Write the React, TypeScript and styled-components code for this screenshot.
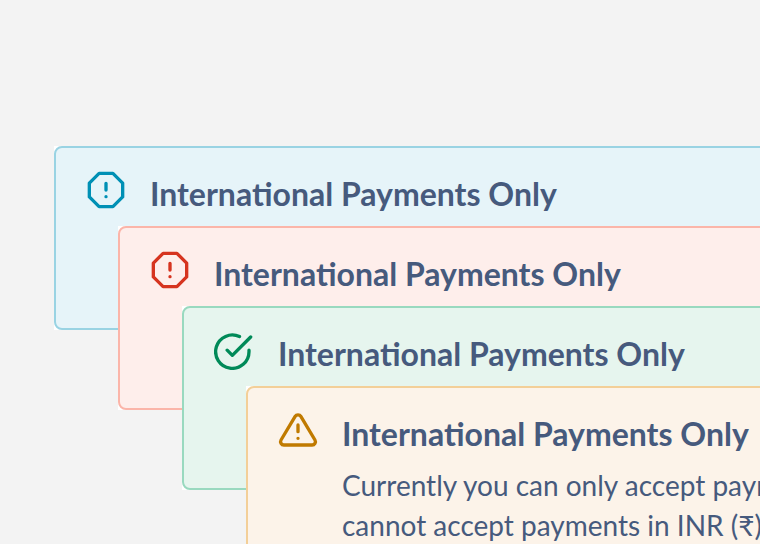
import React from "react";
import styled, { createGlobalStyle } from "styled-components";

const GlobalStyle = createGlobalStyle`
  * { box-sizing: border-box; }
  body { margin: 0; background: #f3f3f3; font-family: Lato, sans-serif; }
`;

type Tone = "info" | "negative" | "positive" | "notice";

const tones: Record<Tone, { bg: string; border: string; icon: string }> = {
  info: { bg: "#e6f4f9", border: "#99d3e3", icon: "#0090b5" },
  negative: { bg: "#feeeeb", border: "#fbb5a9", icon: "#d6341f" },
  positive: { bg: "#e6f5ee", border: "#99d9bf", icon: "#008a58" },
  notice: { bg: "#fcf3e9", border: "#f3cf98", icon: "#c07a00" },
};

const Stage = styled.main`
  position: relative;
  width: 760px;
  height: 544px;
  overflow: hidden;
  background: #f3f3f3;
`;

const Layer = styled.div<{ $level: number }>`
  position: absolute;
  left: ${({ $level }) => 54 + $level * 64}px;
  top: ${({ $level }) => 146 + $level * 80}px;
  width: 900px;
  height: 184px;
  background: #ffffff;
`;

const Alert = styled.section<{ $tone: Tone }>`
  height: 100%;
  padding: 22px 30px;
  display: flex;
  gap: 24px;
  border: 2px solid ${({ $tone }) => tones[$tone].border};
  border-radius: 8px;
  background: ${({ $tone }) => tones[$tone].bg};
`;

const Icon = styled.svg<{ $tone: Tone }>`
  flex: none;
  width: 40px;
  height: 40px;
  fill: none;
  stroke: ${({ $tone }) => tones[$tone].icon};
  stroke-width: 2;
  stroke-linecap: round;
  stroke-linejoin: round;
`;

const Copy = styled.div`
  flex: 1;
  padding-top: 1px;
  color: #465a7d;
  white-space: nowrap;
`;

const Title = styled.h2`
  margin: 0;
  font-size: 32px;
  line-height: 46px;
  font-weight: 700;
`;

const Description = styled.p`
  margin: 8px 0 0;
  font-size: 28px;
  line-height: 40px;
`;

function ToneIcon({ tone }: { tone: Tone }) {
  return (
    <Icon $tone={tone} viewBox="0 0 24 24">
      {(tone === "info" || tone === "negative") && (
        <path d="M7.86 2h8.28L22 7.86v8.28L16.14 22H7.86L2 16.14V7.86zM12 8v4M12 16h.01" />
      )}
      {tone === "positive" && (
        <path d="M21 12.1V13a10 10 0 1 1-5.7-9.03M22 4.2 11 15.2l-3.1-3.1" />
      )}
      {tone === "notice" && (
        <path d="M10.29 3.86 1.82 18a2 2 0 0 0 1.71 3h16.94a2 2 0 0 0 1.71-3L13.71 3.86a2 2 0 0 0-3.42 0zM12 9v4M12 17h.01" />
      )}
    </Icon>
  );
}

const order: Tone[] = ["info", "negative", "positive", "notice"];

export default function App() {
  return (
    <Stage>
      <GlobalStyle />
      {order.map((tone, level) => (
        <Layer key={tone} $level={level}>
          <Alert $tone={tone}>
            <ToneIcon tone={tone} />
            <Copy>
              <Title>International Payments Only</Title>
              {tone === "notice" && (
                <Description>
                  Currently you can only accept payments in<br />cannot accept payments in INR (₹)
                </Description>
              )}
            </Copy>
          </Alert>
        </Layer>
      ))}
    </Stage>
  );
}
